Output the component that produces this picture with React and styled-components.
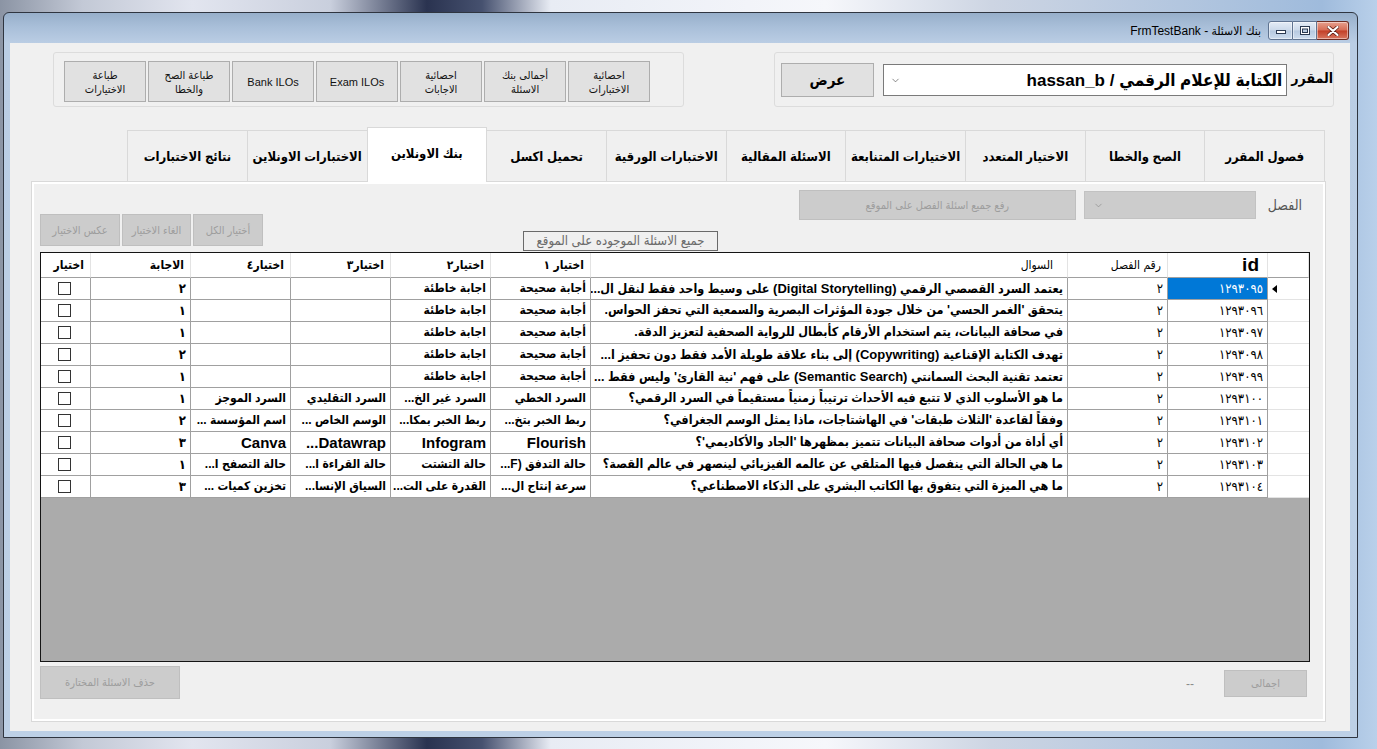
import React from 'react';
import styled, { createGlobalStyle } from 'styled-components';
import { ChevronDown } from 'lucide-react';

const GlobalStyle = createGlobalStyle`
  html, body {
    margin: 0;
    padding: 0;
  }
  body {
    width: 1377px;
    height: 749px;
    overflow: hidden;
    font-family: "Liberation Sans", "DejaVu Sans Condensed", "DejaVu Sans", sans-serif;
    background: linear-gradient(90deg, #8b94a4 0%, #c3c9d6 6%, #e2e5ef 14%, #c9cfdd 24%, #2a3350 31%, #46516f 35%, #e8ecf4 40%, #f6f7fb 60%, #cdd5e3 72%, #9fbbdc 96%, #b9d0ea 100%);
  }
`;

const Window = styled.div`
  box-sizing: border-box;
  margin: 12px 0 0 3px;
  width: 1355px;
  height: 726px;
  border: 1px solid #2f3540;
  border-radius: 6px 6px 0 0;
  background: linear-gradient(180deg, #97afca 0px, #a9bfd9 14px, #bacde4 30px, #bdd0e6 100%);
  padding: 0 7px 6px 6px;
  display: flex;
  flex-direction: column;
`;

const TitleBar = styled.div`
  height: 30px;
  display: flex;
  justify-content: flex-end;
  align-items: flex-start;
  padding-right: 1px;
`;

const Caption = styled.div`
  margin: 10px 7px 0 0;
  font-size: 12px;
  line-height: 16px;
  color: #000;
  direction: rtl;
`;

const CaptionButtons = styled.div`
  display: flex;
  margin-top: 8px;
`;

const CapButton = styled.div`
  box-sizing: border-box;
  width: ${p => p.$w}px;
  height: 19px;
  display: flex;
  align-items: center;
  justify-content: center;
  border: 1px solid ${p => (p.$close ? '#6d2c22' : '#5f7390')};
  border-left-width: ${p => (p.$first ? 1 : 0)}px;
  border-radius: ${p => (p.$first ? '3px 0 0 3px' : p.$close ? '0 3px 3px 0' : '0')};
  background: ${p =>
    p.$close
      ? 'linear-gradient(180deg, #e6a08e 0%, #d66c55 48%, #c23f27 52%, #d8765f 100%)'
      : 'linear-gradient(180deg, #e4ecf6 0%, #cbd9ea 48%, #b6c9e0 52%, #cddcee 100%)'};
  box-shadow: inset 0 0 0 1px rgba(255, 255, 255, 0.45);
`;

const Client = styled.div`
  flex: 1;
  background: #f0f0f0;
  display: flex;
  flex-direction: column;
`;

const TopRow = styled.div`
  display: flex;
  justify-content: space-between;
  margin: 9px 16px 0 43px;
  height: 55px;
`;

const GroupBox = styled.div`
  box-sizing: border-box;
  width: ${p => p.$w}px;
  height: 55px;
  border: 1px solid #dcdcdc;
  border-radius: 3px;
  display: flex;
  align-items: flex-start;
  padding: ${p => p.$pad};
  gap: ${p => p.$gap || 0}px;
`;

const ToolButton = styled.div`
  box-sizing: border-box;
  width: 82px;
  height: 41px;
  border: 1px solid #adadad;
  background: #e1e1e1;
  display: flex;
  align-items: center;
  justify-content: center;
  text-align: center;
  font-size: 11px;
  line-height: 14px;
  color: #111;
  direction: rtl;
`;

const ShowButton = styled.div`
  box-sizing: border-box;
  width: 96px;
  height: 34px;
  border: 1px solid #adadad;
  background: #e1e1e1;
  display: flex;
  align-items: center;
  justify-content: center;
  font-size: 15px;
  font-weight: bold;
`;

const CourseSelect = styled.div`
  box-sizing: border-box;
  width: 418px;
  height: 32px;
  margin: 1px 0 0 9px;
  border: 1px solid #7a7a7a;
  background: #fff;
  display: flex;
  align-items: center;
  justify-content: space-between;
  padding: 0 4px 0 6px;
  font-size: 17px;
  font-weight: bold;
  color: #000;
`;

const FieldLabel = styled.div`
  margin: ${p => p.$m};
  font-size: 14px;
  font-weight: ${p => (p.$bold ? 'bold' : 'normal')};
  color: ${p => p.$color || '#000'};
  direction: rtl;
  white-space: nowrap;
`;

const Tabs = styled.div`
  margin: 20px 0 0 21px;
  width: 1295px;
  display: flex;
  flex-direction: column;
`;

const TabStrip = styled.div`
  height: 54px;
  display: flex;
  justify-content: flex-end;
  align-items: flex-end;
  padding-right: 1px;
`;

const Tab = styled.div`
  box-sizing: border-box;
  width: 120.7px;
  height: ${p => (p.$active ? 55 : 51)}px;
  margin-left: -1px;
  margin-bottom: ${p => (p.$active ? -1 : 0)}px;
  border: 1px solid #d9d9d9;
  border-bottom: none;
  background: ${p => (p.$active ? '#fff' : '#f0f0f0')};
  position: relative;
  z-index: ${p => (p.$active ? 2 : 1)};
  display: flex;
  align-items: center;
  justify-content: center;
  padding-bottom: ${p => (p.$active ? 3 : 0)}px;
  font-size: 13px;
  font-weight: bold;
  color: #000;
  direction: rtl;
  white-space: nowrap;
`;

const Page = styled.div`
  box-sizing: border-box;
  height: 541px;
  border: 1px solid #d9d9d9;
  padding: 2px;
  box-shadow: inset 0 0 0 2px #fff;
  background: #f0f0f0;
  display: flex;
  flex-direction: column;
`;

const PageHead = styled.div`
  height: 68px;
  display: flex;
  align-items: flex-start;
  padding: 0 21px 0 6px;
`;

const ButtonRow = styled.div`
  display: flex;
  gap: 2px;
  margin-top: ${p => p.$top || 0}px;
`;

const DisabledButton = styled.div`
  box-sizing: border-box;
  width: ${p => p.$w}px;
  height: ${p => p.$h}px;
  margin: ${p => p.$m || 0};
  border: 1px solid #bfbfbf;
  background: #cccccc;
  display: flex;
  align-items: center;
  justify-content: center;
  font-size: 11px;
  color: #9d9d9d;
  direction: rtl;
  white-space: nowrap;
`;

const Legend = styled.div`
  box-sizing: border-box;
  width: 195px;
  height: 20px;
  margin: 47px 0 0 260px;
  border: 1px solid #6a6a6a;
  font-size: 13px;
  line-height: 18px;
  text-align: center;
  color: #6a6a6a;
  direction: rtl;
  white-space: nowrap;
  overflow: hidden;
`;

const Spacer = styled.div`
  flex: 1;
`;

const ChapterSelect = styled.div`
  box-sizing: border-box;
  width: 172px;
  height: 28px;
  margin: 7px 0 0 8px;
  border: 1px solid #c2c2c2;
  background: #cccccc;
  display: flex;
  align-items: center;
  padding-left: 8px;
`;

const Grid = styled.div`
  box-sizing: border-box;
  margin-left: 6px;
  width: 1270px;
  height: 410px;
  border: 1px solid #141414;
  background: #ababab;
`;

const cols = '50px repeat(5, 100px) 1fr 100px 100px 41px';

const HeadRow = styled.div`
  display: grid;
  grid-template-columns: ${cols};
  height: 25px;
  background: #fff;
`;

const HeadCell = styled.div`
  box-sizing: border-box;
  border-right: 1px solid #e3e3e3;
  border-bottom: 1px solid #a0a0a0;
  display: flex;
  align-items: center;
  justify-content: flex-start;
  padding-right: ${p => p.$pr || 6}px;
  font-size: ${p => (p.$big ? 19 : 12)}px;
  font-weight: ${p => (p.$bold ? 'bold' : 'normal')};
  color: #000;
  direction: rtl;
  white-space: nowrap;
`;

const Row = styled.div`
  display: grid;
  grid-template-columns: ${cols};
  height: 22px;
`;

const Cell = styled.div`
  box-sizing: border-box;
  border-right: 1px solid #a0a0a0;
  border-bottom: 1px solid #a0a0a0;
  background: ${p => (p.$sel ? '#0078d7' : '#fff')};
  color: ${p => (p.$sel ? '#fff' : '#000')};
  padding: 0 4px 0 2px;
  font-size: ${p => p.$size || 13}px;
  line-height: 21px;
  font-weight: ${p => (p.$plain ? 'normal' : 'bold')};
  direction: rtl;
  text-align: right;
  white-space: nowrap;
  overflow: hidden;
`;

const Latin = styled.span`
  font-size: 13px;
`;

const CheckCell = styled(Cell)`
  display: flex;
  align-items: center;
  justify-content: center;
`;

const Check = styled.div`
  box-sizing: border-box;
  width: 13px;
  height: 13px;
  border: 1px solid #333;
  background: #fff;
`;

const RowHead = styled.div`
  box-sizing: border-box;
  border-bottom: 1px solid #e3e3e3;
  background: #fff;
  display: flex;
  align-items: center;
  justify-content: flex-start;
  padding-left: 4px;
`;

const BottomRow = styled.div`
  display: flex;
  justify-content: space-between;
  align-items: flex-start;
  margin-top: 4px;
  padding: 0 16px 0 6px;
`;

const TotalBox = styled.div`
  display: flex;
  align-items: center;
  margin-top: 4px;
`;

const Dashes = styled.div`
  font-size: 12px;
  color: #8a8a8a;
  margin-right: 30px;
`;

const toolButtons = [
  'طباعة\nالاختيارات',
  'طباعة الصح\nوالخطا',
  'Bank ILOs',
  'Exam ILOs',
  'احصائية\nالاجابات',
  'أجمالى بنك\nالاسئلة',
  'احصائية\nالاختبارات',
];

const tabs = [
  'نتائج الاختبارات',
  'الاختبارات الاونلاين',
  'بنك الاونلاين',
  'تحميل اكسل',
  'الاختبارات الورقية',
  'الاسئلة المقالية',
  'الاختيارات المتنابعة',
  'الاختيار المتعدد',
  'الصح والخطا',
  'فصول المقرر',
];

const ok = 'أجابة صحيحة';
const bad = 'اجابة خاطئة';

const questions = [
  ['١٢٩٣٠٩٥', 'يعتمد السرد القصصي الرقمي (Digital Storytelling) على وسيط واحد فقط لنقل ال...', ok, bad, '', '', '٢'],
  ['١٢٩٣٠٩٦', "يتحقق 'الغمر الحسي' من خلال جودة المؤثرات البصرية والسمعية التي تحفز الحواس.", ok, bad, '', '', '١'],
  ['١٢٩٣٠٩٧', 'في صحافة البيانات، يتم استخدام الأرقام كأبطال للرواية الصحفية لتعزيز الدقة.', ok, bad, '', '', '١'],
  ['١٢٩٣٠٩٨', 'تهدف الكتابة الإقناعية (Copywriting) إلى بناء علاقة طويلة الأمد فقط دون تحفيز ا...', ok, bad, '', '', '٢'],
  ['١٢٩٣٠٩٩', "تعتمد تقنية البحث السمانتي (Semantic Search) على فهم 'نية القارئ' وليس فقط ...", ok, bad, '', '', '١'],
  ['١٢٩٣١٠٠', 'ما هو الأسلوب الذي لا تتبع فيه الأحداث ترتيباً زمنياً مستقيماً في السرد الرقمي؟', 'السرد الخطي', 'السرد غير الخ...', 'السرد التقليدي', 'السرد الموجز', '١'],
  ['١٢٩٣١٠١', "وفقاً لقاعدة 'الثلاث طبقات' في الهاشتاجات، ماذا يمثل الوسم الجغرافي؟", 'ربط الخبر بتخ...', 'ربط الخبر بمكا...', 'الوسم الخاص ...', 'اسم المؤسسة ...', '٢'],
  ['١٢٩٣١٠٢', "أي أداة من أدوات صحافة البيانات تتميز بمظهرها 'الجاد والأكاديمي'؟", 'Flourish', 'Infogram', 'Datawrap...', 'Canva', '٣'],
  ['١٢٩٣١٠٣', 'ما هي الحالة التي ينفصل فيها المتلقي عن عالمه الفيزيائي لينصهر في عالم القصة؟', 'حالة التدفق (F...', 'حالة التشتت', 'حالة القراءة ا...', 'حالة التصفح ا...', '١'],
  ['١٢٩٣١٠٤', 'ما هي الميزة التي يتفوق بها الكاتب البشري على الذكاء الاصطناعي؟', 'سرعة إنتاج ال...', 'القدرة على الت...', 'السياق الإنسا...', 'تخزين كميات ...', '٣'],
];

// latin-only option names render a size up, like the grid does
const optionSize = s => (/^[A-Za-z.]+$/.test(s) ? 15 : 12);

// english terms inside a question are set slightly larger than the arabic
function QuestionText({ text }) {
  return text.split(/(\([A-Za-z ]+\))/).map((part, i) =>
    /^\([A-Za-z ]+\)$/.test(part) ? <Latin key={i}>{part}</Latin> : part
  );
}

function MinGlyph() {
  return (
    <svg width="10" height="6" viewBox="0 0 10 6">
      <rect x="0.5" y="2.5" width="9" height="3" fill="#fff" stroke="#2b3a52" />
    </svg>
  );
}

function MaxGlyph() {
  return (
    <svg width="10" height="9" viewBox="0 0 10 9">
      <rect x="0.5" y="0.5" width="9" height="8" fill="#fff" stroke="#2b3a52" />
      <rect x="2.5" y="3" width="5" height="3.5" fill="#b9cbe0" stroke="#2b3a52" />
    </svg>
  );
}

function CloseGlyph() {
  return (
    <svg width="12" height="10" viewBox="0 0 12 10">
      <path d="M1.5 1 L10.5 9 M10.5 1 L1.5 9" stroke="#5a1d14" strokeWidth="3.6" strokeLinecap="round" />
      <path d="M1.5 1 L10.5 9 M10.5 1 L1.5 9" stroke="#fff" strokeWidth="2.2" strokeLinecap="round" />
    </svg>
  );
}

function RowPointer() {
  return (
    <svg width="5" height="8" viewBox="0 0 5 8">
      <path d="M5 0 L0 4 L5 8 Z" fill="#000" />
    </svg>
  );
}

export default function App() {
  return (
    <>
      <GlobalStyle />
      <Window>
        <TitleBar>
          <Caption>بنك الاسئلة - FrmTestBank</Caption>
          <CaptionButtons>
            <CapButton $w={25} $first><MinGlyph /></CapButton>
            <CapButton $w={24}><MaxGlyph /></CapButton>
            <CapButton $w={32} $close><CloseGlyph /></CapButton>
          </CaptionButtons>
        </TitleBar>

        <Client>
          <TopRow>
            <GroupBox $w={631} $pad="8px 0 0 10px" $gap={2}>
              {toolButtons.map(t => (
                <ToolButton key={t}>
                  <span>
                    {t.split('\n').map((line, i) => (
                      <div key={i}>{line}</div>
                    ))}
                  </span>
                </ToolButton>
              ))}
            </GroupBox>
            <GroupBox $w={560} $pad="10px 0 0 6px">
              <ShowButton>عرض</ShowButton>
              <CourseSelect>
                <ChevronDown size={11} color="#555" strokeWidth={1.5} />
                <span dir="rtl">الكتابة للإعلام الرقمي / hassan_b</span>
              </CourseSelect>
              <FieldLabel $m="7px 0 0 4px" $bold>المقرر</FieldLabel>
            </GroupBox>
          </TopRow>

          <Tabs>
            <TabStrip>
              {tabs.map(t => (
                <Tab key={t} $active={t === 'بنك الاونلاين'}>{t}</Tab>
              ))}
            </TabStrip>
            <Page>
              <PageHead>
                <ButtonRow $top={30}>
                  <DisabledButton $w={80} $h={32}>عكس الاختيار</DisabledButton>
                  <DisabledButton $w={69} $h={32}>الغاء الاختيار</DisabledButton>
                  <DisabledButton $w={70} $h={32}>أختيار الكل</DisabledButton>
                </ButtonRow>
                <Legend>جميع الاسئلة الموجوده على الموقع</Legend>
                <Spacer />
                <DisabledButton $w={277} $h={30} $m="6px 0 0 0">رفع جميع اسئلة الفصل على الموقع</DisabledButton>
                <ChapterSelect>
                  <ChevronDown size={11} color="#8a8a8a" strokeWidth={1.5} />
                </ChapterSelect>
                <FieldLabel $m="13px 0 0 12px" $color="#555">الفصل</FieldLabel>
              </PageHead>

              <Grid>
                <HeadRow>
                  <HeadCell $bold>اختيار</HeadCell>
                  <HeadCell $bold>الاجابة</HeadCell>
                  <HeadCell $bold>اختيار٤</HeadCell>
                  <HeadCell $bold>اختيار٣</HeadCell>
                  <HeadCell $bold>اختيار٢</HeadCell>
                  <HeadCell $bold>اختيار ١</HeadCell>
                  <HeadCell $pr={14}>السوال</HeadCell>
                  <HeadCell>رقم الفصل</HeadCell>
                  <HeadCell $big $bold $pr={8}>id</HeadCell>
                  <HeadCell />
                </HeadRow>
                {questions.map((q, i) => (
                  <Row key={q[0]}>
                    <CheckCell><Check /></CheckCell>
                    <Cell>{q[6]}</Cell>
                    {[q[5], q[4], q[3], q[2]].map((opt, k) => (
                      <Cell key={k} $size={optionSize(opt)}>{opt}</Cell>
                    ))}
                    <Cell $size={12.5}><QuestionText text={q[1]} /></Cell>
                    <Cell $plain>٢</Cell>
                    <Cell $plain $sel={i === 0}>{q[0]}</Cell>
                    <RowHead>{i === 0 && <RowPointer />}</RowHead>
                  </Row>
                ))}
              </Grid>

              <BottomRow>
                <DisabledButton $w={140} $h={33}>حذف الاسئلة المختارة</DisabledButton>
                <TotalBox>
                  <Dashes>--</Dashes>
                  <DisabledButton $w={83} $h={27}>اجمالى</DisabledButton>
                </TotalBox>
              </BottomRow>
            </Page>
          </Tabs>
        </Client>
      </Window>
    </>
  );
}
